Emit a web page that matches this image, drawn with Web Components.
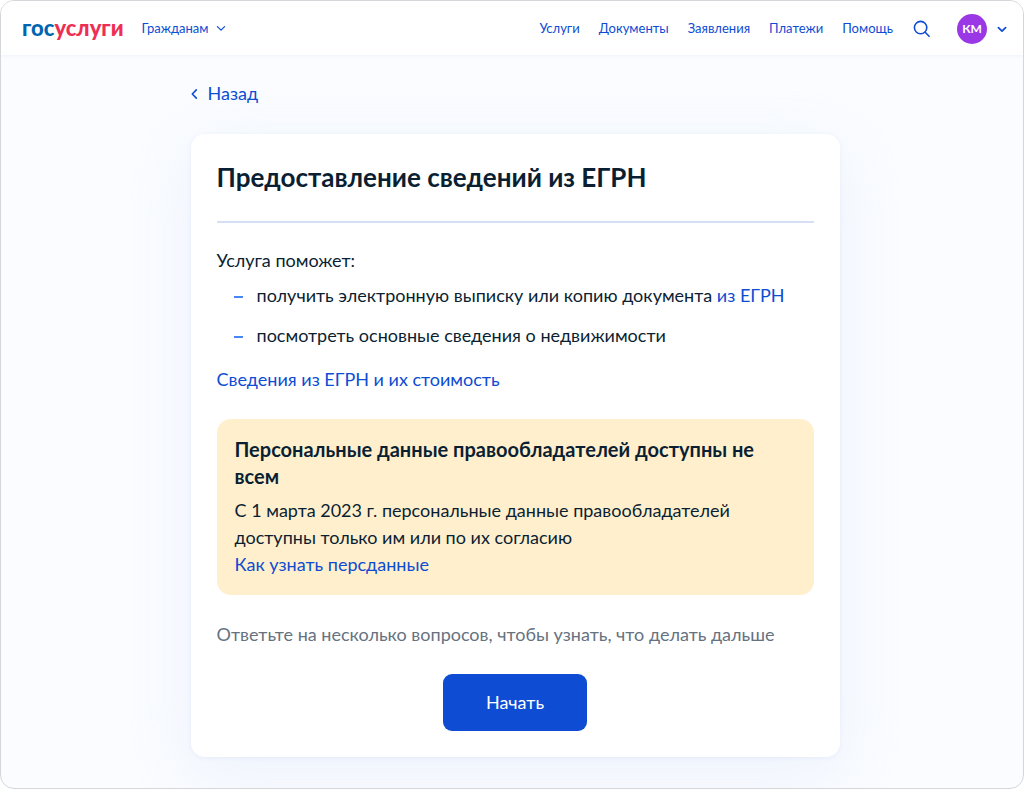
<!DOCTYPE html>
<html lang="ru">
<head>
<meta charset="utf-8">
<meta name="viewport" content="width=device-width, initial-scale=1">
<title>Предоставление сведений из ЕГРН</title>
<style>
  html { height: 100%; background: #fff; }
  body {
    margin: 0;
    min-height: 100%;
    display: flex;
    font-family: Lato, "Open Sans", sans-serif;
    font-size: 18px;
    line-height: 27px;
    color: #0b1f33;
    --link: #0d4cd3;
    --muted: #66727f;
  }
</style>
</head>
<body>
<app-frame>
  <site-header slot="header"></site-header>
  <back-link></back-link>
  <service-card heading="Предоставление сведений из ЕГРН">
    <service-intro></service-intro>
    <info-notice heading="Персональные данные правообладателей доступны не всем">
      С 1 марта 2023 г. персональные данные правообладателей доступны только им или по их согласию
      <text-link slot="link">Как узнать персданные</text-link>
    </info-notice>
    <span slot="hint">Ответьте на несколько вопросов, чтобы узнать, что делать дальше</span>
    <start-button slot="action">Начать</start-button>
  </service-card>
</app-frame>

<script>
const define = (name, html, setup) => {
  const template = document.createElement('template');
  template.innerHTML = html;
  customElements.define(name, class extends HTMLElement {
    constructor() {
      super();
      this.attachShadow({ mode: 'open' }).append(template.content.cloneNode(true));
    }
    connectedCallback() {
      if (setup) setup(this, this.shadowRoot);
    }
  });
};
const setHeading = (host, root) => {
  root.querySelector('h1, h2').textContent = host.getAttribute('heading');
};

define('app-frame', `
  <style>
    :host { display: flex; flex-direction: column; flex: 1; box-sizing: border-box; min-width: 0;
      border: 1px solid #d5d6d9; border-radius: 14px; overflow: hidden; background: #fafcff; }
    main { width: 100%; max-width: 649px; margin: 0 auto; padding: 25px 0 31px 6px; }
  </style>
  <slot name="header"></slot>
  <main><slot></slot></main>
`);

define('text-link', `
  <style>
    :host { display: inline; }
    a { color: var(--link); text-decoration: none; }
    a:hover { text-decoration: underline; }
  </style>
  <a href="#"><slot></slot></a>
`);

define('chevron-icon', `
  <style>
    :host { display: block; flex: none; width: 10px; height: 10px; }
    svg { display: block; fill: none; stroke: currentColor; stroke-width: 1.2;
      stroke-linecap: round; stroke-linejoin: round; }
    :host([bold]) svg { stroke-width: 1.7; }
  </style>
  <svg width="10" height="10" viewBox="0 0 10 10" aria-hidden="true"><path d="M1.4 3.6 5 7.2 8.6 3.6"/></svg>
`);

define('site-logo', `
  <style>
    :host { display: block; padding-bottom: 2px; font: 900 22px/28px Lato, sans-serif; }
    a { color: #ee2f53; text-decoration: none; }
    span { color: #0065b1; }
  </style>
  <a href="#"><span>гос</span>услуги</a>
`);

define('user-menu', `
  <style>
    :host { display: block; }
    button { display: flex; align-items: center; gap: 10px; padding: 0; border: 0;
      background: none; color: var(--link); font: inherit; cursor: pointer; }
    span { display: grid; place-items: center; width: 30px; height: 30px; border-radius: 50%;
      background: #9b38e6; color: #fff; font-size: 12px; line-height: 16px; font-weight: 700; }
  </style>
  <button type="button" aria-haspopup="menu"><span><slot></slot></span><chevron-icon bold></chevron-icon></button>
`);

define('site-header', `
  <style>
    :host { display: block; background: #fff; box-shadow: 0 1px 3px #dfe6f566;
      font-size: 13px; line-height: 20px; }
    header { box-sizing: border-box; display: flex; align-items: center; justify-content: space-between;
      height: 54px; padding: 2px 16px 0 21px; }
    .side, nav { display: flex; align-items: center; }
    .side { gap: 18px; }
    nav { gap: 19px; padding-bottom: 2px; }
    .end { gap: 20px; }
    .audience, .search { display: flex; align-items: center; padding: 0; border: 0; background: none;
      color: var(--link); font: inherit; cursor: pointer; }
    .audience { gap: 8px; padding-bottom: 2px; }
    .search { margin-right: 6px; }
    .search svg { display: block; fill: none; stroke: currentColor; stroke-width: 1.6; stroke-linecap: round; }
  </style>
  <header>
    <div class="side">
      <site-logo></site-logo>
      <button class="audience" type="button">Гражданам<chevron-icon></chevron-icon></button>
    </div>
    <div class="side end">
      <nav>
        <text-link>Услуги</text-link>
        <text-link>Документы</text-link>
        <text-link>Заявления</text-link>
        <text-link>Платежи</text-link>
        <text-link>Помощь</text-link>
      </nav>
      <button class="search" type="button" aria-label="Поиск">
        <svg width="18" height="18" viewBox="0 0 18 18" aria-hidden="true"><circle cx="7.6" cy="7.6" r="6.2"/><path d="m12.2 12.3 3.9 3.9"/></svg>
      </button>
      <user-menu>КМ</user-menu>
    </div>
  </header>
`);

define('back-link', `
  <style>
    :host { display: flex; margin-bottom: 27px; }
    a { display: flex; align-items: center; gap: 10px; color: var(--link); text-decoration: none; }
    svg { display: block; fill: none; stroke: currentColor; stroke-width: 1.6;
      stroke-linecap: round; stroke-linejoin: round; }
  </style>
  <a href="#"><svg width="7" height="11" viewBox="0 0 7 11" aria-hidden="true"><path d="M5.3 1.9 1.3 6l4 4.1"/></svg>Назад</a>
`);

define('service-card', `
  <style>
    :host { display: block; padding: 26px; border-radius: 14px; background: #fff;
      box-shadow: 0 1px 4px #cbd8f255, 0 16px 64px #dfe8f877; }
    h1 { margin: 0; padding-bottom: 26px; border-bottom: 2px solid #d5e0f6;
      font-size: 26px; line-height: 35px; font-weight: 700; }
    p { margin: 26px 0; color: var(--muted); }
    .action { display: flex; justify-content: center; }
  </style>
  <h1></h1>
  <slot></slot>
  <p><slot name="hint"></slot></p>
  <div class="action"><slot name="action"></slot></div>
`, setHeading);

define('service-intro', `
  <style>
    :host { display: block; margin: 24px 0 26px; }
    p { margin: 0; }
    ul { display: grid; gap: 13px; margin: 8px 0 17px; padding: 0 0 0 17px; list-style: none; }
    li { display: flex; gap: 14px; }
    li::before { content: ""; flex: none; width: 9px; height: 2px; margin-top: 14px; background: #4a85f6; }
  </style>
  <p>Услуга поможет:</p>
  <ul>
    <li><span>получить электронную выписку или копию документа <text-link>из ЕГРН</text-link></span></li>
    <li><span>посмотреть основные сведения о недвижимости</span></li>
  </ul>
  <p><text-link>Сведения из ЕГРН и их стоимость</text-link></p>
`);

define('info-notice', `
  <style>
    :host { display: block; padding: 17px 18px; border-radius: 14px; background: #ffefcd; }
    h2 { margin: 0 0 7px; font-size: 20px; line-height: 27px; font-weight: 700; }
    p { margin: 0; }
  </style>
  <h2></h2>
  <p><slot></slot></p>
  <p><slot name="link"></slot></p>
`, setHeading);

define('start-button', `
  <style>
    :host { display: block; }
    button { display: block; padding: 15px 43px; border: 0; border-radius: 9px; background: #0d4cd3;
      color: #fff; font: inherit; cursor: pointer; }
  </style>
  <button type="button"><slot></slot></button>
`);
</script>
</body>
</html>
